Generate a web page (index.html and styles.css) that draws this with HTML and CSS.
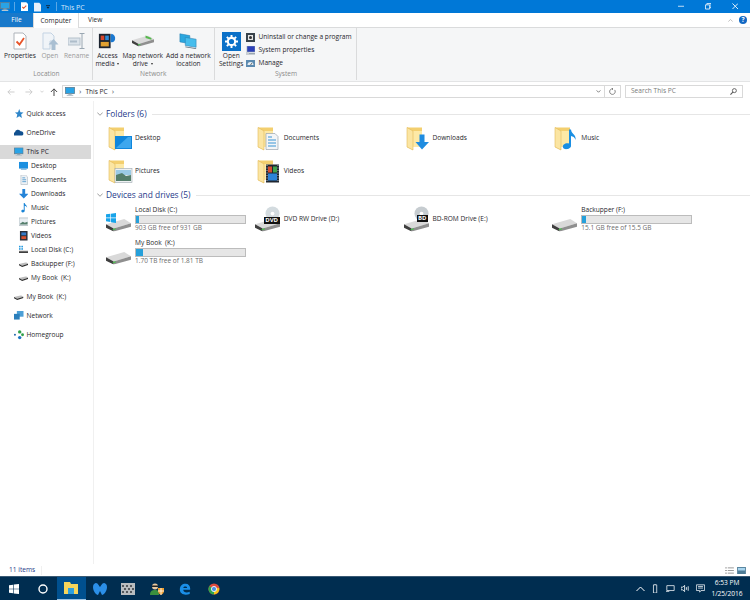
FILE: index.html
```html
<!DOCTYPE html>
<html lang="en">
<head>
<meta charset="utf-8">
<title>This PC</title>
<link rel="stylesheet" href="styles.css">
</head>
<body>
<svg class="defs" aria-hidden="true">
  <symbol id="folder" viewBox="0 0 26 26">
    <path d="M2 2.500h15v19H8v3.500L2 22z" fill="#f3cf6f"/>
    <path d="M8 6h9v15.500H8z" fill="#fde9a6"/>
    <path d="M2 2.500L8 6v19l-6-3z" fill="#fbe5a2"/>
    <path d="M2 2.500L8 6v19l-6-3z" fill="none" stroke="#e3b958" stroke-width=".6"/>
  </symbol>
  <symbol id="drive" viewBox="0 0 26 13">
    <path d="M0 5.500 19 0l7 4.500L8 10z" fill="#d9d9d9"/>
    <path d="M0 5.500 8 10v3L0 9z" fill="#3f3f3f"/>
    <path d="M8 10l18-5.500V8L8 13z" fill="#8f8f8f"/>
    <path d="M7 10.500l3 -.8v1.200l-3 .8z" fill="#46c24a"/>
  </symbol>
  <symbol id="pc" viewBox="0 0 12 11">
    <rect x=".5" y=".5" width="11" height="7.500" fill="#29a3e6" stroke="#5d7f95"/>
    <rect x="4" y="8" width="4" height="1.500" fill="#8aa0ad"/>
    <rect x="2" y="9.500" width="8" height="1.500" fill="#b9c6cf"/>
  </symbol>
  <symbol id="small-drive" viewBox="0 0 12 6">
    <path d="M0 2.500 9 0l3 2-8 2.500z" fill="#bdbdbd"/>
    <path d="M0 2.500l4 2 8-2.500v1.500L4 6 0 4z" fill="#2d2d2d"/>
  </symbol>
</svg>

<div class="window">
  <header class="titlebar">
    <svg class="q-pc" viewBox="0 0 12 11"><use href="#pc"/></svg>
    <span class="q-sep q-sep-a"></span>
    <svg class="q-doc" viewBox="0 0 8 10"><path d="M0 0h6l2 2v8H0z" fill="#fff"/><path d="M1.500 5.500l1.500 1.500 3-3" fill="none" stroke="#e0542a" stroke-width="1.200"/></svg>
    <svg class="q-page" viewBox="0 0 8 10"><path d="M0 0h6l2 2v8H0z" fill="#e8f0fa"/></svg>
    <svg class="q-drop" viewBox="0 0 6 5"><path d="M0 0h6v1H0zM.5 2h5L3 5z" fill="#10253a"/></svg>
    <span class="q-sep q-sep-b"></span>
    <span class="title-text">This PC</span>
    <div class="win-controls">
      <svg class="win-btn" viewBox="0 0 7 7"><path d="M0 3.500h7" stroke="#cfe4f7"/></svg>
      <svg class="win-btn" viewBox="0 0 7 7"><path d="M.5 2h4.500v4.500H.5zM2 2V.5h4.500V5H5" fill="none" stroke="#dcecf9"/></svg>
      <svg class="win-btn" viewBox="0 0 7 7"><path d="M.5.500l6 6M6.500.500l-6 6" stroke="#eef6fd"/></svg>
    </div>
  </header>

  <nav class="tabs">
    <span class="tab tab-file">File</span>
    <span class="tab tab-active">Computer</span>
    <span class="tab tab-view">View</span>
    <svg class="tabs-collapse" viewBox="0 0 7 4"><path d="M.5 3.500l3-3 3 3" fill="none" stroke="#a9a9a9"/></svg>
    <span class="help-dot">?</span>
  </nav>

  <section class="ribbon">
    <div class="group group-location">
      <div class="group-items">
        <div class="rb">
          <svg class="rb-icon" viewBox="0 0 18 18"><path d="M3 1h9l3 3v13H3z" fill="#fff" stroke="#aeb4ba"/><path d="M5.500 9.500l3 3 4.500-6.500" fill="none" stroke="#e8552a" stroke-width="1.800"/></svg>
          <span>Properties</span>
        </div>
        <div class="rb rb-off">
          <svg class="rb-icon" viewBox="0 0 18 18"><path d="M2 1h8l3 3v5H9v8H2z" fill="#f0f4f8" stroke="#c3d3e3"/><path d="M12.500 7l5 5.500h-3V18h-4v-5.500h-3z" fill="#a9bfd2"/></svg>
          <span>Open</span>
        </div>
        <div class="rb rb-off">
          <svg class="rb-icon" viewBox="0 0 18 18"><rect x="0" y="6" width="12" height="7" fill="#dbe3ea" stroke="#b6c2cc"/><rect x="2" y="8.500" width="7" height="2" fill="#aebdca"/><path d="M14 2v14M11.500 1.500h5M11.500 16.500h5" stroke="#9aa7b2" fill="none"/></svg>
          <span>Rename</span>
        </div>
      </div>
      <span class="group-label">Location</span>
    </div>
    <div class="group group-network">
      <div class="group-items">
        <div class="rb">
          <svg class="rb-icon" viewBox="0 0 20 18"><rect x="1" y="1" width="13" height="16" fill="#1c2430"/><rect x="3" y="3" width="4" height="5" fill="#d8452c"/><rect x="8" y="3" width="4" height="5" fill="#2e8ad8"/><rect x="3" y="10" width="9" height="5" fill="#e0a030"/><path d="M15 1c3 1 4.500 3 4 6-.5 3-3 4-5 3V3z" fill="#1b78d0"/></svg>
          <span>Access<br>media <i class="caret"></i></span>
        </div>
        <div class="rb">
          <svg class="rb-icon rb-drive" viewBox="0 0 26 13"><use href="#drive"/><path d="M16 0l7 3v2l-7-2z" fill="#56b84e"/></svg>
          <span>Map network<br>drive <i class="caret"></i></span>
        </div>
        <div class="rb">
          <svg class="rb-icon" viewBox="0 0 20 18"><path d="M1 1l11 2v9L1 10z" fill="#2aa7df" stroke="#2b7fb0" stroke-width=".6"/><path d="M7 5l12 2v9L7 14z" fill="#46bdec" stroke="#2b7fb0" stroke-width=".6"/><path d="M7 15l12 2v1L7 16z" fill="#5a6b78"/></svg>
          <span>Add a network<br>location</span>
        </div>
      </div>
      <span class="group-label">Network</span>
    </div>
    <div class="group group-system">
      <div class="group-items">
        <div class="rb">
          <span class="settings-tile">
            <svg class="settings-gear" viewBox="0 0 16 16"><circle cx="8" cy="8" r="4.500" fill="none" stroke="#fff" stroke-width="2.600"/><path d="M8 0v3M8 13v3M0 8h3M13 8h3M2.300 2.300l2.100 2.100M11.600 11.600l2.100 2.100M13.700 2.300l-2.100 2.100M4.400 11.600l-2.100 2.100" stroke="#fff" stroke-width="2.400"/></svg>
          </span>
          <span>Open<br>Settings</span>
        </div>
        <ul class="sys-list">
          <li>
            <svg class="sys-icon" viewBox="0 0 9 9"><rect width="9" height="9" fill="#38424a"/><rect x="2" y="2" width="5" height="5" fill="#e6e6e6"/><circle cx="4.500" cy="4.500" r="1.500" fill="#333"/></svg>
            Uninstall or change a program
          </li>
          <li>
            <svg class="sys-icon" viewBox="0 0 9 9"><rect x="1" y="0" width="8" height="6" fill="#2c3fb8" stroke="#8fa0b0" stroke-width=".6"/><path d="M0 6h3v3H0z" fill="#c9ced3"/><rect x="3" y="7" width="6" height="1.500" fill="#9aa6b0"/></svg>
            System properties
          </li>
          <li>
            <svg class="sys-icon" viewBox="0 0 9 9"><rect y="1" width="9" height="7" fill="#5b8ab0"/><path d="M1.500 6a3 3 0 0 1 6 0z" fill="#e5edf3"/><path d="M4.500 6l1.500-2" stroke="#333" stroke-width=".7"/></svg>
            Manage
          </li>
        </ul>
      </div>
      <span class="group-label">System</span>
    </div>
  </section>

  <section class="addressrow">
    <svg class="ar ar-back" viewBox="0 0 9 8"><path d="M8.500 4H1M4 1L1 4l3 3" fill="none" stroke="#c8c8c8"/></svg>
    <svg class="ar ar-forward" viewBox="0 0 9 8"><path d="M.5 4H8M5 1l3 3-3 3" fill="none" stroke="#c8c8c8"/></svg>
    <svg class="ar-down" viewBox="0 0 5 3"><path d="M.5.500l2 2 2-2" fill="none" stroke="#c8c8c8"/></svg>
    <svg class="ar ar-up" viewBox="0 0 9 9"><path d="M4.500 9V1M1 4.500L4.500 1 8 4.500" fill="none" stroke="#444" stroke-width="1.100"/></svg>
    <div class="addressbox">
      <svg class="addr-pc" viewBox="0 0 12 11"><use href="#pc"/></svg>
      <span class="crumb-sep">›</span>
      <span class="crumb">This PC</span>
      <span class="crumb-sep">›</span>
      <svg class="addr-drop" viewBox="0 0 6 4"><path d="M.5.500l2.500 2.500L5.500.500" fill="none" stroke="#555"/></svg>
      <span class="addr-refresh">
        <svg class="addr-refresh-icon" viewBox="0 0 8 8"><path d="M6.500 2.200A3.200 3.200 0 1 1 4 .9M4 0v2.200" fill="none" stroke="#666" stroke-width=".9"/></svg>
      </span>
    </div>
    <div class="searchbox">
      <span>Search This PC</span>
      <svg class="search-icon" viewBox="0 0 8 8"><circle cx="5" cy="3" r="2.300" fill="none" stroke="#555"/><path d="M3.300 4.700L.5 7.500" stroke="#555" stroke-width="1.200"/></svg>
    </div>
  </section>

  <main class="main">
    <aside class="sidebar">
      <a class="nav-top">
        <svg class="nav-icon" viewBox="0 0 10 10"><path d="M5.500 0l1.300 3.500 3.200.2-2.500 2.200.9 3.500L5.500 7.600 2.600 9.400l.9-3.500L1 3.700l3.200-.2z" fill="#2f86c9"/></svg>
        Quick access
      </a>
      <a class="nav-top">
        <svg class="nav-icon" viewBox="0 0 10 10"><path d="M0 8a2 2 0 0 1 1-3.500A3.200 3.200 0 0 1 7 3.500 2.300 2.300 0 0 1 9.800 6 1.800 1.800 0 0 1 8.500 8z" fill="#11508f"/></svg>
        OneDrive
      </a>
      <a class="nav-top nav-selected">
        <svg class="nav-icon" viewBox="0 0 12 11"><use href="#pc"/></svg>
        This PC
      </a>
      <a class="nav-sub">
        <svg class="nav-icon" viewBox="0 0 10 10"><rect y="1" width="10" height="7" fill="#1b8fe0"/><rect x="2" y="8" width="6" height="1.200" fill="#6aa9d8"/></svg>
        Desktop
      </a>
      <a class="nav-sub">
        <svg class="nav-icon" viewBox="0 0 10 10"><path d="M2 0h5l2 2v8H2z" fill="#eef2f6" stroke="#a9b3bc" stroke-width=".6"/><path d="M3.500 3h3M3.500 5h4M3.500 7h4" stroke="#3b8ec9" stroke-width=".8"/></svg>
        Documents
      </a>
      <a class="nav-sub">
        <svg class="nav-icon" viewBox="0 0 10 10"><path d="M3.500 0h3v5H10L5 10 0 5h3.500z" fill="#2584d8"/></svg>
        Downloads
      </a>
      <a class="nav-sub">
        <svg class="nav-icon" viewBox="0 0 10 10"><path d="M5 0h1c.3 2 3 2.500 2.500 5C8 3.500 7 3.200 6 3v5.500C6 10 3 10.500 2.500 9S3.500 7 5 7.300z" fill="#1884d6"/></svg>
        Music
      </a>
      <a class="nav-sub">
        <svg class="nav-icon" viewBox="0 0 10 10"><rect y="1" width="10" height="8" fill="#e8eef2" stroke="#9aa6ae" stroke-width=".6"/><path d="M1 7l3-2 2 1 3-1v3H1z" fill="#557f6c"/></svg>
        Pictures
      </a>
      <a class="nav-sub">
        <svg class="nav-icon" viewBox="0 0 10 10"><rect x="1" width="8" height="10" fill="#2b2f3a"/><rect x="2.500" y="1.500" width="5" height="3" fill="#3579c8"/><rect x="2.500" y="5.500" width="5" height="3" fill="#d6502f"/></svg>
        Videos
      </a>
      <a class="nav-sub">
        <svg class="nav-icon" viewBox="0 0 12 10"><rect width="2" height="2" fill="#2299e0"/><rect x="3" width="2" height="2" fill="#2299e0"/><rect y="3" width="2" height="2" fill="#2299e0"/><rect x="3" y="3" width="2" height="2" fill="#2299e0"/><path d="M0 6h12v1H0z" fill="#bdbdbd"/><path d="M0 7h12v2H0z" fill="#2d2d2d"/></svg>
        Local Disk (C:)
      </a>
      <a class="nav-sub">
        <svg class="nav-icon nav-icon-drive" viewBox="0 0 12 6"><use href="#small-drive"/></svg>
        Backupper (F:)
      </a>
      <a class="nav-sub">
        <svg class="nav-icon nav-icon-drive" viewBox="0 0 12 6"><use href="#small-drive"/></svg>
        My Book&nbsp; (K:)
      </a>
      <a class="nav-top nav-gap">
        <svg class="nav-icon nav-icon-drive" viewBox="0 0 12 6"><use href="#small-drive"/></svg>
        My Book&nbsp; (K:)
      </a>
      <a class="nav-top">
        <svg class="nav-icon" viewBox="0 0 10 10"><rect x="3" y="0" width="7" height="6" fill="#4c9fd6"/><rect x="0" y="3" width="6" height="6" fill="#2b7fbb"/></svg>
        Network
      </a>
      <a class="nav-top">
        <svg class="nav-icon" viewBox="0 0 10 10"><circle cx="1" cy="5" r="1" fill="#1a5fa8"/><circle cx="6" cy="2" r="1.800" fill="#2fa04a"/><circle cx="6" cy="8" r="1.800" fill="#1a73c2"/><circle cx="9" cy="5" r="1.500" fill="#2fa04a"/></svg>
        Homegroup
      </a>
    </aside>

    <div class="content">
      <h2 class="group-head"><svg class="head-chev" viewBox="0 0 6 4"><path d="M.3.500L3 3.300 5.700.500" fill="none" stroke="#777" stroke-width=".7"/></svg><span>Folders (6)</span><i></i></h2>
      <div class="tiles">
        <div class="tile">
          <svg class="tile-icon" viewBox="0 0 26 26"><use href="#folder" width="26" height="26"/><path d="M8 11h17v13H8z" fill="#0f86dc"/><path d="M9 23L21 12h3v11z" fill="#3da7ee"/></svg>
          <span class="tile-name">Desktop</span>
        </div>
        <div class="tile">
          <svg class="tile-icon" viewBox="0 0 26 26"><use href="#folder" width="26" height="26"/><path d="M10 8.500h9l3 3v13H10z" fill="#f3f5f7" stroke="#8b97a2" stroke-width=".6"/><path d="M12 12h4M12 15h8M12 18h8M12 21h8" stroke="#3b95d4"/></svg>
          <span class="tile-name">Documents</span>
        </div>
        <div class="tile">
          <svg class="tile-icon" viewBox="0 0 26 26"><use href="#folder" width="26" height="26"/><path d="M14.500 9.500h5V17h4.500L17 24.500 10.500 17h4z" fill="#1f8ce0"/></svg>
          <span class="tile-name">Downloads</span>
        </div>
        <div class="tile">
          <svg class="tile-icon" viewBox="0 0 26 26"><use href="#folder" width="26" height="26"/><path d="M16 4.500h2c.5 5 5.500 5 4.500 10.500-.8-3-2.500-3.500-4.500-4V21c0 3-7 4.500-8 1.500s3-5 6-4z" fill="#1a8fe3"/></svg>
          <span class="tile-name">Music</span>
        </div>
        <div class="tile">
          <svg class="tile-icon" viewBox="0 0 26 26"><use href="#folder" width="26" height="26"/><rect x="8" y="10.500" width="17" height="14" fill="#eef1f3" stroke="#9da7ae" stroke-width=".6"/><path d="M9 12h15v5H9z" fill="#9bcbe6"/><path d="M9 23v-6l6-2 4 3 5-1v6z" fill="#557f6c"/></svg>
          <span class="tile-name">Pictures</span>
        </div>
        <div class="tile">
          <svg class="tile-icon" viewBox="0 0 26 26"><use href="#folder" width="26" height="26"/><rect x="10" y="6.500" width="13" height="18" fill="#1f2630"/><rect x="12" y="8.500" width="4" height="6" fill="#d44d30"/><rect x="17" y="8.500" width="4" height="6" fill="#3fa34d"/><rect x="12" y="15.500" width="9" height="7" fill="#2c83d8"/><path d="M11 7v17M22 7v17" stroke="#dfe3e6" stroke-width=".8" stroke-dasharray="1 1.500"/></svg>
          <span class="tile-name">Videos</span>
        </div>
      </div>

      <h2 class="group-head group-head-devices"><svg class="head-chev" viewBox="0 0 6 4"><path d="M.3.500L3 3.300 5.700.500" fill="none" stroke="#777" stroke-width=".7"/></svg><span>Devices and drives (5)</span><i></i></h2>
      <div class="tiles">
        <div class="tile tile-drive">
          <span class="drive-icon">
            <svg class="drive-svg" viewBox="0 0 26 13"><use href="#drive"/></svg>
            <svg class="win-logo" viewBox="0 0 11 11"><path d="M0 1.500L4.800.8v4.200H0zM5.500.700L11 0v5H5.500zM0 5.700h4.800v4.200L0 9.200zM5.500 5.700H11V11l-5.500-.8z" fill="#18a4ea"/></svg>
          </span>
          <div class="drive-info">
            <span class="drive-name">Local Disk (C:)</span>
            <div class="bar"><div class="bar-fill" style="width:3%"></div></div>
            <small>903 GB free of 931 GB</small>
          </div>
        </div>
        <div class="tile">
          <span class="drive-icon">
            <svg class="disc" viewBox="0 0 16 16"><circle cx="8" cy="8" r="7.500" fill="#d3dbdf"/><circle cx="8" cy="8" r="2" fill="#fff"/></svg>
            <svg class="drive-svg" viewBox="0 0 26 13"><use href="#drive"/></svg>
            <span class="disc-label">DVD</span>
          </span>
          <span class="tile-name">DVD RW Drive (D:)</span>
        </div>
        <div class="tile">
          <span class="drive-icon">
            <svg class="disc" viewBox="0 0 16 16"><circle cx="8" cy="8" r="7.500" fill="#c6ccd0"/><circle cx="8" cy="8" r="2" fill="#fff"/></svg>
            <svg class="drive-svg" viewBox="0 0 26 13"><use href="#drive"/></svg>
            <span class="disc-label disc-label-bd">BD</span>
          </span>
          <span class="tile-name">BD-ROM Drive (E:)</span>
        </div>
        <div class="tile tile-drive">
          <span class="drive-icon">
            <svg class="drive-svg" viewBox="0 0 26 13"><use href="#drive"/></svg>
          </span>
          <div class="drive-info">
            <span class="drive-name">Backupper (F:)</span>
            <div class="bar"><div class="bar-fill" style="width:3.500%"></div></div>
            <small>15.1 GB free of 15.5 GB</small>
          </div>
        </div>
        <div class="tile tile-drive">
          <span class="drive-icon">
            <svg class="drive-svg" viewBox="0 0 26 13"><use href="#drive"/></svg>
          </span>
          <div class="drive-info">
            <span class="drive-name">My Book&nbsp; (K:)</span>
            <div class="bar"><div class="bar-fill" style="width:6%"></div></div>
            <small>1.70 TB free of 1.81 TB</small>
          </div>
        </div>
      </div>
    </div>
  </main>

  <footer class="statusbar">
    <span class="status-text">11 items</span>
    <span class="status-sep"></span>
    <svg class="view-btn" viewBox="0 0 10 8"><path d="M0 1h2M3 1h7M0 4h2M3 4h7M0 7h2M3 7h7" stroke="#8d8d8d"/></svg>
    <svg class="view-btn" viewBox="0 0 10 8"><rect width="10" height="8" fill="#4e7c96"/><rect x="1" y="1" width="8" height="3" fill="#a8d4ee"/></svg>
  </footer>
</div>

<div class="taskbar">
  <span class="task"><svg class="task-start" viewBox="0 0 10 10"><path d="M0 1.300L4.200.700v4H0zM4.800.600L10 0v4.700H4.800zM0 5.300h4.200v4L0 8.700zM4.800 5.300H10V10l-5.200-.6z" fill="#fff"/></svg></span>
  <span class="task"><svg class="task-ring" viewBox="0 0 10 10"><circle cx="5" cy="5" r="4" fill="none" stroke="#fff" stroke-width="1.400"/></svg></span>
  <span class="task task-active"><svg class="task-icon" viewBox="0 0 14 12"><path d="M0 0h6l1 2h7v10H0z" fill="#f6d55c"/><rect x="4" y="6" width="6" height="6" fill="#2da0e0"/></svg></span>
  <span class="task"><svg class="task-icon" viewBox="0 0 14 12"><path d="M0 4C0 1 2 0 3 0c2 0 3 3 4 4 1-1 2-4 4-4 1 0 3 1 3 4 0 4-3 8-5 8L7 8l-2 4C3 12 0 8 0 4z" fill="#2b8fe8"/></svg></span>
  <span class="task"><svg class="task-icon" viewBox="0 0 14 12"><rect width="14" height="12" fill="#b8bcbf"/><path d="M1 2h2v2H1zM5 2h2v2H5zM9 2h2v2H9zM3 5h2v2H3zM7 5h2v2H7zM11 5h2v2h-2zM1 8h2v2H1zM5 8h2v2H5zM9 8h2v2H9z" fill="#55595d"/></svg></span>
  <span class="task"><svg class="task-icon" viewBox="0 0 14 12"><circle cx="5" cy="3.500" r="3" fill="#e8c9a0"/><rect x="2" y="2.500" width="6" height="1.500" fill="#222"/><path d="M0 12c0-4 2-5 5-5s4 1 4 5z" fill="#3a8f3e"/><path d="M8 5h6v3c0 2-1.500 3-3 4-1.500-1-3-2-3-4z" fill="#f0a030"/><path d="M11 5v7M8 8h6" stroke="#fff" stroke-width=".8"/></svg></span>
  <span class="task"><svg class="task-icon" viewBox="0 0 14 14"><path d="M1 8C1 3 4 1 7.500 1 11.500 1 13.500 4 13 8H5c0 3 4 4 7.500 2.200v2.500C7 15 1 13 1 8zm4-2.200h4.500C9.300 3.500 5.500 3.500 5 5.800z" fill="#1a8fe8"/></svg></span>
  <span class="task"><svg class="task-icon" viewBox="0 0 14 14"><circle cx="7" cy="7" r="6.500" fill="#dd4b3e"/><path d="M7 7L1.500 3.500A6.500 6.500 0 0 0 7 13.500z" fill="#2ea44f"/><path d="M7 7l6 -1.500A6.500 6.500 0 0 1 7 13.500z" fill="#f5c518"/><circle cx="7" cy="7" r="3" fill="#4a90e2" stroke="#fff"/></svg></span>
  <div class="tray">
    <svg class="tray-icon" viewBox="0 0 9 6"><path d="M.5 5.500l4-4 4 4" fill="none" stroke="#fff"/></svg>
    <svg class="tray-icon" viewBox="0 0 9 11"><path d="M2 1h4v10H2zM4 0v1" fill="none" stroke="#e6edf2"/></svg>
    <svg class="tray-icon" viewBox="0 0 11 9"><path d="M1 1h9v6H1zM0 8h4" fill="none" stroke="#e6edf2"/></svg>
    <svg class="tray-icon" viewBox="0 0 10 9"><path d="M0 3h2l2-2v7L2 6H0zM6 3v3M8 2v5" fill="none" stroke="#e6edf2"/></svg>
    <svg class="tray-icon" viewBox="0 0 11 10"><path d="M.5.500h10v7H6L4.500 9.500V7.500h-4zM2.500 2.500h6M2.500 4.500h6" fill="none" stroke="#e6edf2"/></svg>
    <div class="clock"><span>6:53 PM</span><span>1/25/2016</span></div>
  </div>
</div>
</body>
</html>
```
FILE: styles.css
```css
* { box-sizing: border-box; }
html, body { margin: 0; height: 100%; }
body {
  width: 750px;
  height: 600px;
  overflow: hidden;
  display: flex;
  flex-direction: column;
  background: #fff;
  color: #1f1f2b;
  font-family: "Open Sans", "Noto Sans", sans-serif;
  font-size: 6.600px;
  line-height: 1;
}
.defs { width: 0; height: 0; display: block; overflow: hidden; }
svg { display: block; flex: none; }
.window { flex: 1; display: flex; flex-direction: column; min-height: 0; }

/* title bar */
.titlebar {
  height: 13px;
  flex: none;
  display: flex;
  align-items: center;
  background: #0078d7;
  color: #d8eafa;
}
.q-pc { width: 10px; height: 9px; }
.q-sep { width: 1px; height: 9px; background: #5aa7e6; }
.q-sep-a { margin-left: 4px; }
.q-doc { width: 7px; height: 9px; margin-left: 6px; }
.q-page { width: 7px; height: 10px; margin-left: 6px; }
.q-drop { width: 4px; height: 4px; margin-left: 5px; }
.q-sep-b { margin-left: 6px; }
.title-text { margin-left: 4px; padding-top: 1px; font-size: 7px; }
.win-controls { margin-left: auto; display: flex; gap: 20.500px; padding-right: 12px; }
.win-btn { width: 6.500px; height: 6.500px; }

/* tabs */
.tabs {
  height: 15px;
  flex: none;
  display: flex;
  align-items: stretch;
  background: #fff;
  border-bottom: 1px solid #dadbdc;
}
.tab { display: flex; align-items: center; justify-content: center; padding-top: 1px; }
.tab-file { width: 33px; background: #1979ca; color: #fff; }
.tab-active {
  width: 46px;
  margin-bottom: -1px;
  background: #fff;
  border-left: 1px solid #dadbdc;
  border-right: 1px solid #dadbdc;
}
.tab-view { margin-left: 9px; }
.tabs-collapse { width: 5px; height: 3px; margin: auto 0 auto auto; }
.help-dot {
  width: 8px;
  height: 8px;
  margin: auto 3px auto 6px;
  border-radius: 50%;
  background: #1268c3;
  color: #fff;
  font-size: 6.500px;
  font-weight: 700;
  display: flex;
  align-items: center;
  justify-content: center;
}

/* ribbon */
.ribbon {
  height: 54px;
  flex: none;
  display: flex;
  background: #f5f6f7;
  border-bottom: 1px solid #e3e4e5;
}
.group {
  display: flex;
  flex-direction: column;
  height: 52px;
  border-right: 1px solid #dadbdc;
  white-space: nowrap;
}
.group-location { width: 93px; padding-left: 4px; }
.group-network { width: 122px; padding-left: 2.500px; }
.group-system { width: 142px; padding-left: 4px; }
.group-items { flex: 1; display: flex; gap: 5px; padding-top: 4px; }
.group-network .group-items { gap: 3px; }
.group-system .group-items { gap: 3px; }
.group-label { height: 9px; padding-right: 3px; text-align: center; color: #8a8a8a; }
.rb {
  display: flex;
  flex-direction: column;
  align-items: center;
  text-align: center;
  line-height: 7.800px;
}
.rb-off { color: #9a9a9a; }
.rb-icon { width: 18px; height: 18px; margin-bottom: 2px; }
.rb-drive { padding: 3px 0; width: 22px; }
.caret {
  display: inline-block;
  margin-left: 1px;
  vertical-align: 1px;
  border: 1.500px solid transparent;
  border-top: 2px solid #333;
  border-bottom: 0;
}
.settings-tile {
  width: 19px;
  height: 19px;
  margin-bottom: 1px;
  background: #0a70c8;
  display: flex;
  align-items: center;
  justify-content: center;
}
.settings-gear { width: 13px; height: 13px; }
.sys-list {
  list-style: none;
  margin: .5px 0 0;
  padding: 0;
  display: flex;
  flex-direction: column;
  gap: 4px;
}
.sys-list li { display: flex; align-items: center; gap: 3px; height: 9px; }
.sys-icon { width: 9px; height: 9px; }

/* address */
.addressrow {
  height: 19px;
  flex: none;
  display: flex;
  align-items: center;
  background: #fff;
}
.ar { width: 8px; height: 8px; }
.ar-back { margin-left: 7px; }
.ar-forward { margin-left: 10px; }
.ar-down { width: 4px; height: 3px; margin-left: 7px; }
.ar-up { margin-left: 6px; }
.addressbox {
  margin-left: 4px;
  width: 559px;
  height: 13px;
  display: flex;
  align-items: center;
  border: 1px solid #d9d9d9;
  padding-left: 2px;
}
.addr-pc { width: 10px; height: 9px; }
.crumb-sep { margin: 0 4px 1px; color: #555; font-size: 8px; }
.crumb { color: #1f1f2b; padding-top: 1px; }
.addr-drop { width: 5px; height: 3px; margin-left: auto; margin-right: 3px; }
.addr-refresh {
  width: 16px;
  height: 100%;
  border-left: 1px solid #d9d9d9;
  display: flex;
  align-items: center;
  justify-content: center;
}
.addr-refresh-icon { width: 7px; height: 7px; }
.searchbox {
  margin-left: 4px;
  width: 118px;
  height: 13px;
  display: flex;
  align-items: center;
  justify-content: space-between;
  border: 1px solid #d9d9d9;
  padding: 0 5px;
  color: #7a7a7a;
}
.search-icon { width: 7px; height: 7px; }

/* main */
.main { flex: 1; min-height: 0; display: flex; }
.sidebar {
  width: 94px;
  flex: none;
  padding-top: 6px;
  border-right: 1px solid #f0f0f0;
  display: flex;
  flex-direction: column;
}
.sidebar a { display: flex; align-items: center; gap: 3px; color: #1f1f2b; }
.nav-top { height: 14px; margin-bottom: 5px; padding-left: 14px; width: 91px; }
.nav-sub { height: 14px; padding-left: 18.500px; }
.nav-selected { background: #d9d9d9; margin-bottom: 0; }
.nav-gap { margin-top: 5px; }
.nav-icon { width: 9.500px; height: 9.500px; }
.nav-icon-drive { height: 5px; }

.content { flex: 1; padding: 6px 0 0 3px; min-width: 0; }
.group-head {
  margin: 0;
  height: 14px;
  display: flex;
  align-items: center;
  font-size: 8.400px;
  font-weight: 400;
  color: #1e3a8a;
}
.group-head-devices { margin-top: 1px; }
.head-chev { width: 6px; height: 4px; margin-right: 3px; }
.group-head i { flex: 1; height: 1px; margin-left: 5px; background: #e6e6e6; }
.tiles {
  display: grid;
  grid-template-columns: repeat(4, 148.750px);
  grid-auto-rows: 33px;
  margin-left: 8px;
}
.tile { display: flex; align-items: center; }
.tile-name { padding-top: 1px; }
.tile-icon { width: 26px; height: 26px; margin: 0 2px; }
.drive-icon {
  width: 30px;
  height: 26px;
  flex: none;
  position: relative;
}
.drive-svg { position: absolute; left: 1px; bottom: 0; width: 25px; height: 12.500px; }
.win-logo { position: absolute; left: 1px; top: 7px; width: 10px; height: 10px; }
.disc { position: absolute; left: 11px; top: 0; width: 15px; height: 15px; }
.disc-label {
  position: absolute;
  left: 10px;
  top: 11px;
  padding: 0 1.500px;
  background: #111;
  color: #fff;
  font-size: 6px;
  line-height: 7px;
  font-weight: 700;
}
.disc-label-bd { left: 14px; top: 9px; }
.drive-info { display: flex; flex-direction: column; width: 111px; margin-top: 1px; }
.drive-name { line-height: 8px; }
.bar {
  height: 8.500px;
  margin: 1px 0 1.500px;
  border: 1px solid #bcbcbc;
  background: #e6e6e6;
}
.bar-fill { height: 100%; background: #26a0da; }
small { font-size: 6.500px; color: #6d6d6d; }

/* status */
.statusbar {
  height: 12px;
  flex: none;
  display: flex;
  align-items: center;
  padding: 0 4px 0 9px;
  color: #1e3a8a;
}
.status-text { padding-top: 1px; }
.status-sep { width: 1px; height: 9px; margin-left: 6px; margin-right: auto; background: #f0f0f0; }
.view-btn { width: 9px; height: 7px; margin-left: 3px; }

/* taskbar */
.taskbar {
  height: 24px;
  flex: none;
  display: flex;
  align-items: center;
  background: #002d50;
  border-top: 1px solid #3a5a74;
}
.task {
  width: 28.500px;
  height: 100%;
  display: flex;
  align-items: center;
  justify-content: center;
}
.task-active { background: #00508f; border-bottom: 1px solid #9cc3e4; }
.task-start { width: 10px; height: 10px; }
.task-ring { width: 10px; height: 10px; }
.task-icon { width: 14px; height: 12px; }
.tray { margin-left: auto; display: flex; align-items: center; gap: 6px; color: #fff; }
.tray-icon { width: 9px; height: 9px; }
.clock {
  width: 33px;
  display: flex;
  flex-direction: column;
  align-items: center;
  gap: 4px;
  font-size: 6.600px;
  margin-right: 6.500px;
}
```
